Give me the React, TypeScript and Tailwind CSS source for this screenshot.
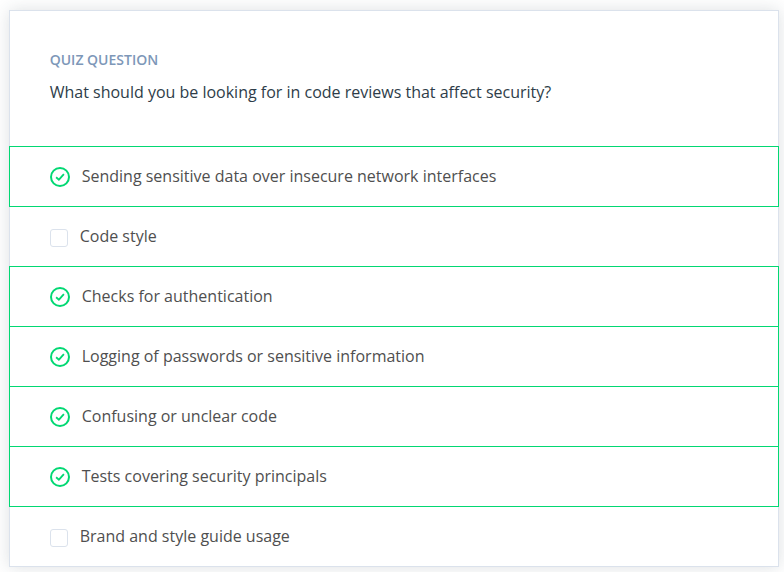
const answers = [
  { text: "Sending sensitive data over insecure network interfaces", correct: true },
  { text: "Code style", correct: false },
  { text: "Checks for authentication", correct: true },
  { text: "Logging of passwords or sensitive information", correct: true },
  { text: "Confusing or unclear code", correct: true },
  { text: "Tests covering security principals", correct: true },
  { text: "Brand and style guide usage", correct: false },
];

function CheckCircle() {
  return (
    <svg className="mt-0.5 h-5 w-5 shrink-0" viewBox="0 0 20 20" fill="none" stroke="#02d873" strokeWidth="2">
      <circle cx="10" cy="10" r="9" />
      <path d="M6.1 10.3l2.8 2.4 5-5.5" strokeWidth="1.8" />
    </svg>
  );
}

function Answer({ text, correct }: { text: string; correct: boolean }) {
  return (
    <li
      className={
        correct
          ? "relative -mx-px -mb-px flex h-[61px] items-center border border-[#02d873] pb-0.5 pl-10"
          : "-mb-px flex h-[61px] items-center pb-0.5 pl-10"
      }
    >
      {correct ? (
        <CheckCircle />
      ) : (
        <span className="mt-1 h-[18px] w-[18px] shrink-0 rounded-[3px] border border-[#dbe2ec]" />
      )}
      <span className="ml-[11.7px]">{text}</span>
    </li>
  );
}

export default function App() {
  return (
    <main className="h-[572px] overflow-hidden bg-white pt-2.5 pl-[9px] font-['Open_Sans',sans-serif]">
      <section className="h-[557px] w-[770px] border border-[#dbe2ec] bg-white shadow-[0_0_16px_rgba(46,61,73,0.16)]">
        <header className="h-[135px] pt-[38px] pr-10 pl-[39.7px]">
          <h1 className="text-sm leading-[22px] font-semibold text-[#7d97b8]">QUIZ QUESTION</h1>
          <p className="mt-[9px] text-base leading-6 text-[#2e3d49]">
            What should you be looking for in code reviews that affect security?
          </p>
        </header>
        <ul className="text-base leading-6 text-[#4f4f4f]">
          {answers.map((answer) => (
            <Answer key={answer.text} {...answer} />
          ))}
        </ul>
      </section>
    </main>
  );
}
